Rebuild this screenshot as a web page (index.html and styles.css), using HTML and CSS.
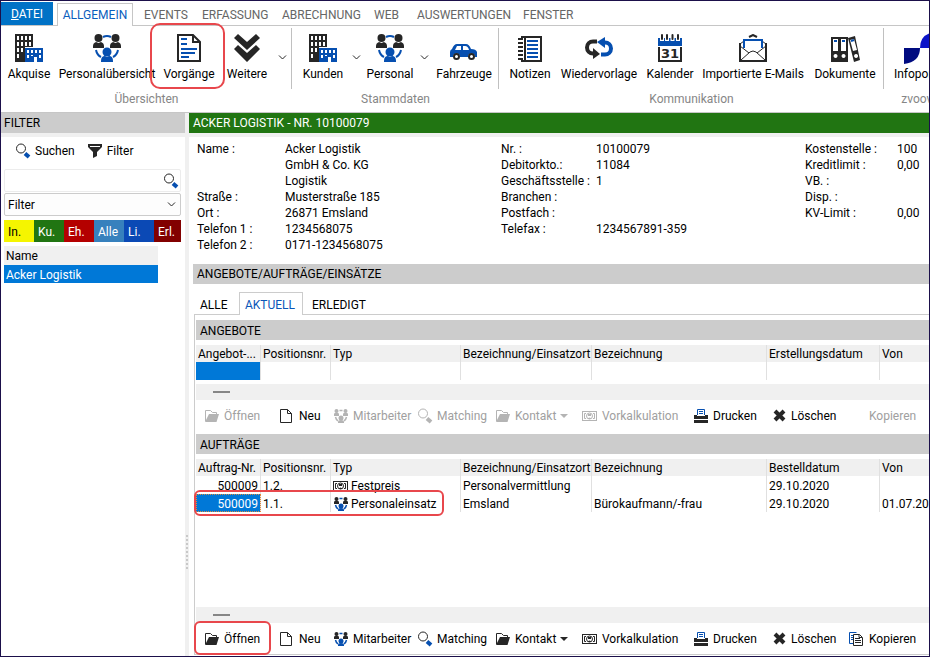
FILE: index.html
```html
<!DOCTYPE html>
<html lang="de">
<head>
<meta charset="utf-8">
<title>Acker Logistik</title>
<link rel="stylesheet" href="styles.css">
</head>
<body>
<svg class="sprite" aria-hidden="true">
  <symbol id="building" viewBox="0 0 28 28">
    <path class="d" fill-rule="evenodd" d="M0 0h18v13h-8v15H0zM2 2v4h2V2zM6 2v4h2V2zM10 2v4h2V2zM14 2v4h2V2zM2 8v4h2V8zM6 8v4h2V8zM10 8v4h2V8zM14 8v4h2V8zM2 14v4h2v-4zM6 14v4h2v-4zM2 20v4h2v-4z"/>
    <path class="b" fill-rule="evenodd" d="M10 14h18v14h-6v-5h-3v5h-9zM12 16v3h2v-3zM16 16v3h2v-3zM20 16v3h2v-3zM24 16v3h2v-3zM12 21v3h2v-3zM16 21v1h2v-1zM24 21v3h2v-3z"/>
  </symbol>
  <symbol id="people" viewBox="0 0 28 28">
    <g class="d"><circle cx="5.500" cy="4" r="4"/><path d="M0 14v-2q0-3 3-4l2.500 1L8 8q3 1 3 4v2z"/><circle cx="22.500" cy="4" r="4"/><path d="M17 14v-2q0-3 3-4l2.500 1L25 8q3 1 3 4v2z"/></g>
    <g class="b"><circle cx="14" cy="18" r="4.500"/><path d="M8 28v-1q0-5 4-5l2 1 2-1q4 0 4 5v1z"/></g>
    <path class="bs" stroke-width="2" d="M10 3q4-2 8 0M3 16q1 5 5 7M25 16q-1 5-5 7"/>
  </symbol>
  <symbol id="people-small" viewBox="0 0 16 14">
    <g class="d"><circle cx="3.500" cy="2" r="2"/><path d="M1 7V5q0-1.500 2.500-1.500T6 5v2z"/><circle cx="12.500" cy="2" r="2"/><path d="M10 7V5q0-1.500 2.500-1.500T15 5v2z"/></g>
    <g class="b"><circle cx="8" cy="9" r="2.500"/><path d="M5 14v-1q0-2 3-2t3 2v1z"/></g>
    <path class="bs" stroke-width="1.500" d="M6.500 1.500h3M2.500 8q.5 2.500 2.500 4M13.500 8q-.5 2.500-2.500 4"/>
  </symbol>
  <symbol id="document" viewBox="0 0 26 28">
    <path class="ds" stroke-width="2" d="M2 1h15l7 7v19H2zM17 1v7h7"/>
    <path class="bs" stroke-width="2" d="M5 5h6M5 10h6M5 15h16M5 19h14M5 23h8"/>
  </symbol>
  <symbol id="chevrons" viewBox="0 0 26 28">
    <path class="d" d="M4 0l9 8 9-8 4 4-13 12L0 4zM4 11l9 8 9-8 4 4-13 13L0 15z"/>
  </symbol>
  <symbol id="down" viewBox="0 0 9 5"><path class="ds" d="M1 .5l3.500 3.500L8 .5"/></symbol>
  <symbol id="car" viewBox="0 0 28 16">
    <path class="b" fill-rule="evenodd" d="M2 5q2-5 5-5h9q3 0 5 5 5 0 6 3v5h-2a3.500 3.500 0 0 0-7 0h-8a3.500 3.500 0 0 0-7 0H0V8q0-2 2-3zM7 2L5 6h6V2zM13 2v4h6q-1-4-4-4z"/>
    <circle class="ds" stroke-width="2" cx="6.500" cy="12.500" r="2.500"/><circle class="ds" stroke-width="2" cx="21.500" cy="12.500" r="2.500"/>
  </symbol>
  <symbol id="notebook" viewBox="0 0 24 26">
    <path class="ds" stroke-width="2" d="M4 1h19v24H4zM7 1v24"/>
    <path stroke="#fff" stroke-width="2" d="M3 5h2M3 9h2M3 13h2M3 17h2M3 21h2"/>
    <path class="ds" stroke-width="2" d="M0 3h5M0 7h5M0 11h5M0 15h5M0 19h5M0 23h5"/>
    <path class="bs" stroke-width="2" d="M9 5h11M9 9h11M9 13h11M9 17h11M9 21h11"/>
  </symbol>
  <symbol id="sync" viewBox="0 0 28 22">
    <path class="ds" stroke-width="4" d="M12 4.500H8a6 6 0 0 0 0 12h2"/><path class="d" d="M8 11l7 6-7 5z"/>
    <path class="bs" stroke-width="4" d="M16 17.500h4a6 6 0 0 0 0-12h-2"/><path class="b" d="M20 0l-8 5 8 6z"/>
  </symbol>
  <symbol id="calendar" viewBox="0 0 24 28">
    <path class="b" d="M0 4h24v8H0z"/><path class="ds" stroke-width="2" d="M1 13v14h22V13"/>
    <path stroke="#fff" stroke-width="4" d="M4 2v5M9 2v5M14.500 2v5M20 2v5"/>
    <path class="ds" stroke-width="2" stroke-linecap="round" d="M4 1v4M9 1v4M14.500 1v4M20 1v4"/>
    <text class="day" x="12" y="24" text-anchor="middle">31</text>
  </symbol>
  <symbol id="mail" viewBox="0 0 28 28">
    <path class="ds" stroke-width="2" d="M1 9v18h26V9M10 3l4-2 4 2"/>
    <path class="ds" d="M1 10l4-3M27 10l-4-3M1 12l9 7M27 12l-9 7M2 26l9-8q3-2 6 0l9 8"/>
    <path class="bs" stroke-width="2" d="M5 14V6h18v8"/>
  </symbol>
  <symbol id="binders" viewBox="0 0 29 26">
    <path class="d" fill-rule="evenodd" d="M0 1h17v25H0zM2 3v12h5V3zM10 3v12h5V3zM4.500 18a2 2 0 1 0 .1 0zM12.500 18a2 2 0 1 0 .1 0zM17 2l7-2 5 24-6 2zM19 4l3 11 4-1-3-11zM25 18a2 2 0 1 0 .1 0z"/>
    <path class="bs" stroke-width="2" d="M3 5h3M11 5h3M20 5l3-1"/>
  </symbol>
  <symbol id="brand" viewBox="0 0 32 32">
    <path fill="#000b80" d="M0 16h16q0 14-16 16z"/><path fill="#0b13c8" d="M16 16Q16 1 32 0v16z"/>
  </symbol>
  <symbol id="lens" viewBox="0 0 16 16">
    <circle class="ds" cx="6" cy="5.500" r="4.500"/><path class="bs" stroke-width="4" d="M10 10.500l4 3.500"/>
  </symbol>
  <symbol id="funnel" viewBox="0 0 16 16"><path class="d" d="M1 1h14v3l-5 5v4l-4 2V9L1 4z"/><path stroke="#fff" d="M3 3.500h10"/></symbol>
  <symbol id="folder" viewBox="0 0 16 16">
    <path class="ds" d="M1.500 13V2.500h5l2 2h4v2"/><path class="d" d="M5 6h10l-2.500 8H1z"/>
  </symbol>
  <symbol id="page" viewBox="0 0 16 16"><path class="ds" d="M1.500 1.500h7l4 4v9h-11zM8.500 1.500v4h4"/></symbol>
  <symbol id="money" viewBox="0 0 16 10">
    <path class="d" fill-rule="evenodd" d="M0 0h15v10H0zM1 1v8h13V1z"/><path class="ds" d="M4 2.500H2.500v5H4M11 2.500h1.500v5H11"/><circle class="ds" cx="7.500" cy="5" r="3"/><path class="d" d="M5.500 8q2-3 4 0zM6 3h3v2H6z"/>
  </symbol>
  <symbol id="printer" viewBox="0 0 16 16">
    <path class="bs" d="M4.500 7V1.500h7V7M6 3.500h4M6 5.500h4"/><path class="d" d="M1 7h3v1h8V7h3v4H1zM1 12h14v3H1z"/>
  </symbol>
  <symbol id="cross" viewBox="0 0 14 14"><path class="ds" stroke-width="4" d="M2 2l9 9M11 2L2 11"/></symbol>
  <symbol id="copy" viewBox="0 0 16 16">
    <path class="bs" d="M4 12.500H.5V1.500h7M2 4.500h2M2 6.500h2M2 8.500h2"/><path class="ds" d="M4.500 3.500h6l3 3v8h-9zM10 3.500v3h3M6 7.500h5M6 9.500h6M6 11.500h6"/>
  </symbol>
  <symbol id="caret" viewBox="0 0 8 4"><path class="d" d="M0 0h8L4 4z"/></symbol>
</svg>

<div class="window">
  <nav class="menu">
    <a class="file" href="#">DATEI</a>
    <a class="current" href="#">ALLGEMEIN</a>
    <a href="#">EVENTS</a>
    <a href="#">ERFASSUNG</a>
    <a href="#">ABRECHNUNG</a>
    <a href="#">WEB</a>
    <a href="#">AUSWERTUNGEN</a>
    <a href="#">FENSTER</a>
  </nav>

  <header class="ribbon">
    <section class="group overview">
      <div class="tools">
        <button><svg width="28" height="28"><use href="#building"/></svg>Akquise</button>
        <button><svg width="28" height="28"><use href="#people"/></svg>Personalübersicht</button>
        <button class="marked"><svg width="26" height="28"><use href="#document"/></svg>Vorgänge</button>
        <button><svg width="26" height="28"><use href="#chevrons"/></svg>Weitere</button>
        <button class="more" aria-label="Mehr"><svg width="9" height="5"><use href="#down"/></svg></button>
      </div>
      <h2>Übersichten</h2>
    </section>
    <section class="group master">
      <div class="tools">
        <button><svg width="28" height="28"><use href="#building"/></svg>Kunden</button>
        <button class="more" aria-label="Mehr"><svg width="9" height="5"><use href="#down"/></svg></button>
        <button><svg width="28" height="28"><use href="#people"/></svg>Personal</button>
        <button class="more" aria-label="Mehr"><svg width="9" height="5"><use href="#down"/></svg></button>
        <button><svg class="low" width="28" height="16"><use href="#car"/></svg>Fahrzeuge</button>
      </div>
      <h2>Stammdaten</h2>
    </section>
    <section class="group communication">
      <div class="tools">
        <button><svg class="low" width="24" height="26"><use href="#notebook"/></svg>Notizen</button>
        <button><svg width="28" height="22"><use href="#sync"/></svg>Wiedervorlage</button>
        <button><svg width="24" height="28"><use href="#calendar"/></svg>Kalender</button>
        <button><svg width="28" height="28"><use href="#mail"/></svg>Importierte E-Mails</button>
        <button><svg class="low" width="29" height="26"><use href="#binders"/></svg>Dokumente</button>
      </div>
      <h2>Kommunikation</h2>
    </section>
    <section class="group portal">
      <div class="tools">
        <button><svg width="32" height="32"><use href="#brand"/></svg>Infoportal</button>
      </div>
      <h2>zvoove</h2>
    </section>
  </header>

  <div class="workspace">
    <aside class="sidebar">
      <h3 class="title">FILTER</h3>
      <div class="side-body">
        <div class="side-tools">
          <button><svg width="16" height="16"><use href="#lens"/></svg>Suchen</button>
          <button><svg width="16" height="16"><use href="#funnel"/></svg>Filter</button>
        </div>
        <label class="search"><input type="text" aria-label="Suche"><svg width="16" height="16"><use href="#lens"/></svg></label>
        <div class="choice">
          <select aria-label="Filter"><option>Filter</option></select>
          <svg width="9" height="5"><use href="#down"/></svg>
        </div>
        <div class="states">
          <button class="yellow">In.</button><button class="green">Ku.</button><button class="red">Eh.</button><button class="sky">Alle</button><button class="blue">Li.</button><button class="maroon">Erl.</button>
        </div>
        <table class="names">
          <thead><tr><th>Name</th></tr></thead>
          <tbody><tr><td>Acker Logistik</td></tr></tbody>
        </table>
      </div>
    </aside>
    <div class="splitter"></div>
    <main class="content">
      <h3 class="title customer">ACKER LOGISTIK - NR. 10100079</h3>
      <div class="details">
        <dl>
          <dt>Name :</dt><dd>Acker Logistik<br>GmbH &amp; Co. KG<br>Logistik</dd>
          <dt>Straße :</dt><dd>Musterstraße 185</dd>
          <dt>Ort :</dt><dd>26871 Emsland</dd>
          <dt>Telefon 1 :</dt><dd>1234568075</dd>
          <dt>Telefon 2 :</dt><dd>0171-1234568075</dd>
        </dl>
        <dl>
          <dt>Nr. :</dt><dd>10100079</dd>
          <dt>Debitorkto.:</dt><dd>11084</dd>
          <dt>Geschäftsstelle :</dt><dd>1</dd>
          <dt>Branchen :</dt><dd></dd>
          <dt>Postfach :</dt><dd></dd>
          <dt>Telefax :</dt><dd>1234567891-359</dd>
        </dl>
        <dl>
          <dt>Kostenstelle :</dt><dd>100</dd>
          <dt>Kreditlimit :</dt><dd>0,00</dd>
          <dt>VB. :</dt><dd></dd>
          <dt>Disp. :</dt><dd></dd>
          <dt>KV-Limit :</dt><dd>0,00</dd>
        </dl>
      </div>
      <h3 class="bar outer">ANGEBOTE/AUFTRÄGE/EINSÄTZE</h3>
      <nav class="tabs">
        <a href="#">ALLE</a><a class="current" href="#">AKTUELL</a><a href="#">ERLEDIGT</a>
      </nav>
      <div class="panel">
        <h3 class="bar">ANGEBOTE</h3>
        <table class="grid">
          <colgroup><col class="c1"><col class="c2"><col class="c3"><col class="c4"><col class="c5"><col class="c6"><col></colgroup>
          <thead><tr><th>Angebot-...</th><th>Positionsnr.</th><th>Typ</th><th>Bezeichnung/Einsatzort</th><th>Bezeichnung</th><th>Erstellungsdatum</th><th>Von</th></tr></thead>
          <tbody><tr><td class="picked"></td><td></td><td></td><td></td><td></td><td></td><td></td></tr></tbody>
        </table>
        <div class="scroll"><span></span></div>
        <div class="toolbar">
          <button disabled><svg width="16" height="16"><use href="#folder"/></svg>Öffnen</button>
          <button><svg width="16" height="16"><use href="#page"/></svg>Neu</button>
          <button disabled><svg width="16" height="14"><use href="#people-small"/></svg>Mitarbeiter</button>
          <button disabled><svg width="16" height="16"><use href="#lens"/></svg>Matching</button>
          <button disabled><svg width="16" height="16"><use href="#folder"/></svg>Kontakt<svg width="8" height="4"><use href="#caret"/></svg></button>
          <button disabled><svg width="16" height="10"><use href="#money"/></svg>Vorkalkulation</button>
          <button><svg width="16" height="16"><use href="#printer"/></svg>Drucken</button>
          <button><svg width="14" height="14"><use href="#cross"/></svg>Löschen</button>
          <button disabled><svg width="16" height="16"></svg>Kopieren</button>
        </div>
        <h3 class="bar">AUFTRÄGE</h3>
        <table class="grid">
          <colgroup><col class="c1"><col class="c2"><col class="c3"><col class="c4"><col class="c5"><col class="c6"><col></colgroup>
          <thead><tr><th>Auftrag-Nr.</th><th>Positionsnr.</th><th>Typ</th><th>Bezeichnung/Einsatzort</th><th>Bezeichnung</th><th>Bestelldatum</th><th>Von</th></tr></thead>
          <tbody>
            <tr><td class="num">500009</td><td>1.2.</td><td class="kind"><svg width="16" height="10"><use href="#money"/></svg>Festpreis</td><td>Personalvermittlung</td><td></td><td>29.10.2020</td><td></td></tr>
            <tr><td class="num picked focus marked">500009</td><td>1.1.</td><td class="kind"><svg width="16" height="14"><use href="#people-small"/></svg>Personaleinsatz</td><td>Emsland</td><td>Bürokaufmann/-frau</td><td>29.10.2020</td><td>01.07.2020</td></tr>
          </tbody>
        </table>
        <div class="scroll last"><span></span></div>
        <div class="toolbar">
          <button class="marked"><svg width="16" height="16"><use href="#folder"/></svg>Öffnen</button>
          <button><svg width="16" height="16"><use href="#page"/></svg>Neu</button>
          <button><svg width="16" height="14"><use href="#people-small"/></svg>Mitarbeiter</button>
          <button><svg width="16" height="16"><use href="#lens"/></svg>Matching</button>
          <button><svg width="16" height="16"><use href="#folder"/></svg>Kontakt<svg width="8" height="4"><use href="#caret"/></svg></button>
          <button><svg width="16" height="10"><use href="#money"/></svg>Vorkalkulation</button>
          <button><svg width="16" height="16"><use href="#printer"/></svg>Drucken</button>
          <button><svg width="14" height="14"><use href="#cross"/></svg>Löschen</button>
          <button><svg width="16" height="16"><use href="#copy"/></svg>Kopieren</button>
        </div>
      </div>
    </main>
  </div>
</div>
</body>
</html>
```
FILE: styles.css
```css
*, *::before, *::after { box-sizing: border-box; }
:root { --dark: #262626; --blue: #064fb0; --mark: #e8474c; }
body { margin: 0; font: 12px/16px "Segoe UI", Roboto, "Noto Sans", sans-serif; color: #000; background: #fff; }
h2, h3, dl, dd { margin: 0; font-size: 12px; font-weight: 400; }
a { color: inherit; text-decoration: none; }
button, input, select { font: inherit; color: inherit; background: none; border: 0; padding: 0; margin: 0; }
button { white-space: nowrap; }
svg { flex: none; display: block; }
.sprite { position: absolute; width: 0; height: 0; }
.d { fill: var(--dark); }
.b { fill: var(--blue); }
.ds { fill: none; stroke: var(--dark); }
.bs { fill: none; stroke: var(--blue); }
.day { font: bold 13px "DejaVu Sans", sans-serif; fill: var(--dark); }

.window { min-height: 100vh; display: flex; flex-direction: column; border: 1px solid #1b0f4a; overflow: hidden; }

.menu { display: grid; grid-template-columns: 52px 84px 58px 80px 92px 43px 106px 1fr; height: 25px; color: #666; border-bottom: 1px solid #c6c6c6; }
.menu a { padding: 6px 0 0 7px; white-space: nowrap; }
.menu .file { margin-top: 1px; padding: 4px 0 0; text-align: center; color: #fff; background: #0072c6; }
.menu .file::first-letter { text-decoration: underline; }
.menu .current { margin: 2px 4px -1px; padding: 3px 0 0; text-align: center; color: #0a5ebd; background: #fff; border: 1px solid #c6c6c6; border-bottom: 0; }

.ribbon { display: flex; height: 87px; border-bottom: 1px solid #c6c6c6; }
.group { flex: none; display: flex; flex-direction: column; position: relative; }
.group:not(:last-child)::after { content: ""; position: absolute; right: 0; top: 2px; height: 61px; border-right: 1px solid #c0c0c0; }
.group h2 { text-align: center; color: #868686; }
.tools { display: grid; height: 65px; }
.overview .tools { grid-template-columns: 56px 100px 64px 52px 19px; }
.master .tools { grid-template-columns: 50px 16px 52px 16px 64px; padding: 0 3px 0 6px; }
.communication .tools { grid-template-columns: 50px 88px 54px 112px 72px; padding: 0 3px 0 6px; }
.portal .tools { grid-template-columns: 72px; }
.tools button { position: relative; display: grid; grid-template-rows: 28px 16px; gap: 4px; padding-top: 8px; align-content: start; place-items: center; justify-content: center; }
.tools .low { align-self: end; }
.tools svg[height="16"] { margin-bottom: 2px; }
.tools .more { padding-top: 17px; }
.marked { position: relative; }
.marked::after { content: ""; position: absolute; border: 2px solid var(--mark); border-radius: 6px; pointer-events: none; }
.tools .marked::after { inset: -3px -4px 2px -7px; border-radius: 10px; z-index: 1; }

.workspace { flex: 1; display: flex; }
.sidebar { flex: none; width: 184px; }
.title { height: 24px; padding: 2px 3px; background: #ccc; border-bottom: 4px solid #f0f0f0; }
.customer { padding-left: 4px; color: #fff; background: #217512; }
.side-body { padding: 4px 4px 0 3px; }
.side-tools { display: flex; gap: 12px; padding: 2px 11px; height: 28px; align-items: flex-start; }
.side-tools button { display: flex; align-items: center; gap: 4px; }
.search { display: flex; align-items: center; height: 23px; border: 1px solid #ececec; border-radius: 2px; padding-right: 1px; }
.search input { flex: 1; min-width: 0; height: 21px; outline: 0; padding: 0 4px; }
.choice { display: grid; align-items: center; height: 23px; margin: 1px 0 4px; border: 1px solid #ccc; border-radius: 2px; background: #fdfdfd; }
.choice select, .choice svg { grid-area: 1 / 1; }
.choice select { appearance: none; padding-left: 3px; width: 100%; height: 21px; }
.choice svg { justify-self: end; margin-right: 4px; pointer-events: none; }
.states { display: grid; grid-template-columns: repeat(5, 30px) 1fr; height: 22px; margin-bottom: 4px; color: #fff; }
.states button { text-align: left; padding: 2px 0 0 4px; }
.yellow { background: #f5f500; color: #000; }
.green { background: #217512; }
.red { background: #b40000; }
.sky { background: #3781bd; }
.blue { background: #0b49b5; }
.maroon { background: #820000; }
.names { width: 154px; border-collapse: collapse; }
.names th, .names td { height: 19px; padding: 0 2px; text-align: left; font-weight: 400; }
.names th { background: #f0f0f0; }
.names td { background: #0078d7; color: #fff; height: 18px; padding-top: 2px; }

.splitter { flex: none; width: 4px; background: #f0f0f0; display: flex; align-items: center; }
.splitter::before { content: ""; width: 2px; height: 34px; margin: 334px 0 0 1px; background: repeating-linear-gradient(#c8c8c8 0 2px, transparent 2px 4px); }

.content { flex: 1; min-width: 0; display: flex; flex-direction: column; }
.details { display: grid; grid-template-columns: 304px 304px 1fr; padding: 4px 0 11px 8px; height: 127px; }
.details dl { display: grid; grid-template-columns: 88px 1fr; align-content: start; white-space: nowrap; }
.details dl:nth-child(2) { grid-template-columns: 95px 1fr; }
.details dl:nth-child(3) { grid-template-columns: 92px 1fr; }
.details dt, .details dd { min-height: 16px; }
.bar { height: 20px; padding: 3px 4px 0; background: #ccc; flex: none; }
.outer { margin-left: 4px; padding-top: 2px; }
.tabs { display: grid; grid-template-columns: 45px 64px 1fr; height: 31px; margin-left: 5px; padding-top: 8px; border-bottom: 1px solid #ccc; }
.tabs a { padding: 5px 0 0 6px; }
.tabs a:last-child { padding-left: 9px; }
.tabs .current { margin-bottom: -1px; padding: 4px 0 0 5px; color: #0a56b8; background: #fff; border: 1px solid #ccc; border-bottom: 0; }
.panel { flex: 1; display: flex; flex-direction: column; margin: 0 0 1px 5px; padding: 5px 0 0 1px; border: solid #ccc; border-width: 0 0 1px 1px; min-width: 0; }
.grid { width: 100%; margin: 5px 0 4px; table-layout: fixed; border-collapse: separate; border-spacing: 0; flex: none; }
.c1 { width: 65px; }
.c2 { width: 70px; }
.c3 { width: 130px; }
.c4 { width: 131px; }
.c5 { width: 175px; }
.c6 { width: 113px; }
.grid th, .grid td { height: 18px; padding: 2px 0 0 2px; text-align: left; font-weight: 400; white-space: nowrap; border-right: 1px solid #e0e0e0; line-height: 16px; }
.grid th { height: 17px; line-height: 15px; background: #f0f0f0; }
.grid th:last-child, .grid td:last-child { border-right: 0; }
.grid .num { text-align: right; padding-right: 2px; }
.grid .picked { background: #0078d7; color: #fff; }
.grid .focus { outline: 1px dotted #e08a3c; outline-offset: -1px; }
.kind svg { display: inline-block; vertical-align: middle; margin: -2px 2px 0 0; }
td.marked::after { left: -2px; top: -4px; width: 250px; height: 26px; z-index: 1; }
.scroll { flex: none; height: 16px; background: #f0f0f0; padding: 7px 17px; }
.scroll span { display: block; width: 17px; height: 2px; background: #868686; }
.scroll.last { margin-top: auto; }
.toolbar { flex: none; display: grid; grid-template-columns: 75px 54px 84px 78px 87px 111px 80px 76px 1fr; height: 34px; padding-left: 8px; }
.scroll.last + .toolbar { height: 31px; }
.toolbar button { display: flex; align-items: center; gap: 4px; height: 31px; }
.toolbar button:disabled { color: #a0a0a0; --dark: #b4b4b4; --blue: #b4b4b4; }
.toolbar .marked::after { inset: -2px 8px -1px -10px; }
```
